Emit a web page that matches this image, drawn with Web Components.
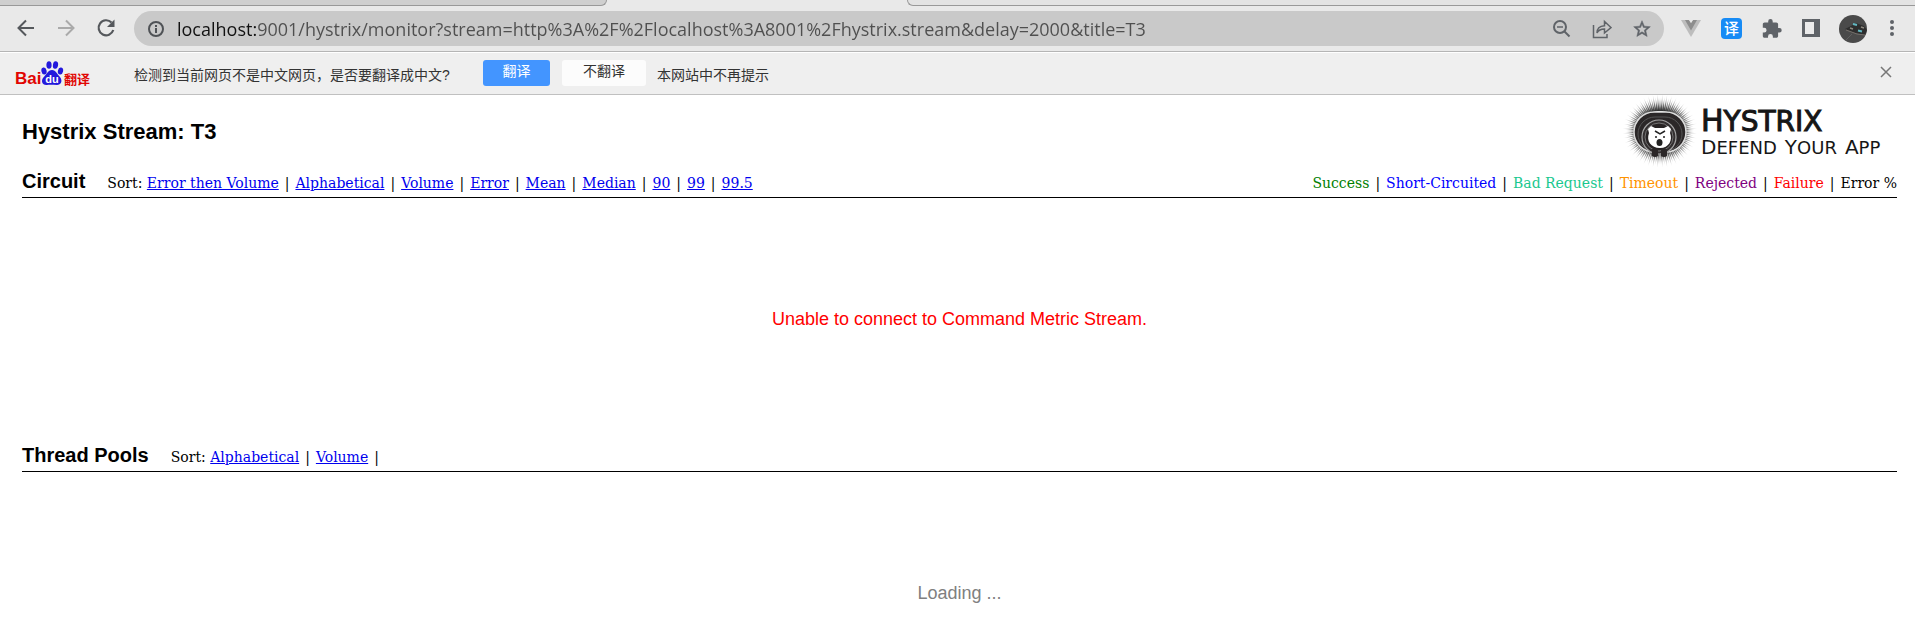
<!DOCTYPE html>
<html lang="en">
<head>
<meta charset="utf-8">
<title>Hystrix Monitor</title>
<style>
html, body { margin: 0; background: #fff; }
body { font-family: "Liberation Sans", Arial, sans-serif; color: #000; }
</style>
</head>
<body>
<hystrix-app></hystrix-app>
<script>
const define = (name, html, setup) => {
  const template = document.createElement('template');
  template.innerHTML = '<style>*{box-sizing:border-box}:host{display:block}button{font:inherit;color:inherit;border:0;padding:0;background:none;cursor:pointer}svg{display:block}</style>' + html;
  customElements.define(name, class extends HTMLElement {
    constructor() {
      super();
      this.attachShadow({ mode: 'open' }).append(template.content.cloneNode(true));
    }
    connectedCallback() { if (setup) setup(this, this.shadowRoot); }
  });
};

define('tab-strip', `
<style>
:host { display: grid; grid-template-columns: 607px 300px 1fr; height: 6px; background: #e9e9e9; }
.tab { background: #cfcfcf; border-bottom: 1px solid #999; border-right: 1px solid #999; border-radius: 0 0 8px 0; }
.rest { background: #e3e3e3; border-bottom: 1px solid #999; border-left: 1px solid #999; border-radius: 0 0 0 8px; }
</style>
<div class="tab"></div><div></div><div class="rest"></div>`);

define('address-bar', `
<style>
:host { flex: 1; min-width: 0; }
.pill { display: flex; align-items: center; height: 35px; border-radius: 18px; background: #c9c9c9; padding: 0 12px 0 13px; }
input { flex: 1; min-width: 0; margin: 0 0 0 10px; padding: 0; border: 0; outline: 0; height: 30px; font: 18px "Open Sans", "Noto Sans", sans-serif; color: transparent; caret-color: #111; background: linear-gradient(90deg, #111 79px, #4f4f4f 79px); -webkit-background-clip: text; background-clip: text; }
.actions { display: flex; gap: 20px; }
button { width: 20px; height: 20px; }
</style>
<div class="pill">
  <button aria-label="Site information"><svg width="20" height="20" viewBox="0 0 20 20"><circle cx="9" cy="10" r="7" fill="none" stroke="#4f5256" stroke-width="2"/><path d="M9 9v5M9 6v2" stroke="#4f5256" stroke-width="2"/></svg></button>
  <input type="text" aria-label="Address" spellcheck="false" value="localhost:9001/hystrix/monitor?stream=http%3A%2F%2Flocalhost%3A8001%2Fhystrix.stream&amp;delay=2000&amp;title=T3">
  <div class="actions">
    <button aria-label="Zoom"><svg width="20" height="20" viewBox="0 0 20 20" fill="none" stroke="#5f6368" stroke-width="2"><circle cx="8" cy="8" r="6"/><path d="M5 8h6" stroke-width="1.5"/><path d="M12.500 12.500l5 5"/></svg></button>
    <button aria-label="Share"><svg width="20" height="20" viewBox="0 0 20 20" fill="none" stroke="#5f6368" stroke-width="1.5"><path d="M1.500 6v12.500H15V15"/><path d="M5 14c0-5 3-7 7.500-7.300V2.500L19 8.500l-6.500 5.500v-4C9 10 6.500 11 5 14z"/></svg></button>
    <button aria-label="Bookmark"><svg width="20" height="20" viewBox="0 0 24 24" fill="#5f6368"><path d="M22 9.240l-7.190-.62L12 2 9.190 8.630 2 9.240l5.460 4.730L5.820 21 12 17.270 18.180 21l-1.630-7.030L22 9.240zM12 15.400l-3.760 2.270 1-4.280-3.320-2.880 4.380-.38L12 6.100l1.710 4.040 4.380.38-3.320 2.880 1 4.280L12 15.400z" stroke="#5f6368" stroke-width=".6"/></svg></button>
  </div>
</div>`);

define('browser-toolbar', `
<style>
:host { display: flex; align-items: center; height: 46px; padding: 0 14px; background: #e9e9e9; border-bottom: 1px solid #b5b5b5; }
.nav { display: flex; gap: 16px; margin-right: 16px; }
.ext { display: flex; align-items: center; gap: 16px; margin-left: 15px; }
button { width: 24px; height: 24px; }
.avatar { width: 28px; height: 28px; }
.ext .more { width: 18px; }
</style>
<div class="nav">
  <button aria-label="Back"><svg width="24" height="24" viewBox="0 0 24 24" fill="none" stroke="#55585c" stroke-width="2"><path d="M20 11H5M12 3.500L4.500 11l7.500 7.500"/></svg></button>
  <button aria-label="Forward"><svg width="24" height="24" viewBox="0 0 24 24" fill="none" stroke="#aaa" stroke-width="2"><path d="M4 11h15M12 3.500l7.500 7.500-7.500 7.500"/></svg></button>
  <button aria-label="Reload"><svg width="24" height="24" viewBox="0 0 24 24"><path d="M17.500 5.500A7.500 7.500 0 1 0 19.300 13" fill="none" stroke="#55585c" stroke-width="2.200"/><path d="M20.500 2.500v7.500H13z" fill="#55585c"/></svg></button>
</div>
<address-bar></address-bar>
<div class="ext">
  <button aria-label="Vue devtools"><svg width="24" height="24" viewBox="0 0 24 24"><path d="M2 3h20L12 20z" fill="#bdbdbd"/><path d="M6 3h4l2 3 2-3h4L12 13.500z" fill="#8d8d8d"/><path d="M10 3h4l-2 3z" fill="#e9e9e9"/></svg></button>
  <button aria-label="Translate"><svg width="24" height="24" viewBox="0 0 24 24"><rect x="2" y="1" width="21" height="21" rx="4" fill="#178bf5"/><text x="12.500" y="17" font-size="15" font-weight="500" fill="#fff" text-anchor="middle" font-family="'Noto Sans CJK SC', sans-serif">译</text></svg></button>
  <button aria-label="Extensions"><svg width="24" height="24" viewBox="0 0 24 24" fill="#5f6368"><g transform="translate(2 1) scale(.9)"><path d="M20.500 11H19V7c0-1.100-.9-2-2-2h-4V3.500a2.500 2.500 0 0 0-5 0V5H4c-1.100 0-2 .9-2 2v3.800h1.500a2.700 2.700 0 0 1 0 5.400H2V20c0 1.100.9 2 2 2h3.800v-1.500a2.700 2.700 0 0 1 5.400 0V22H17c1.100 0 2-.9 2-2v-4h1.500a2.500 2.500 0 0 0 0-5z"/></g></svg></button>
  <button aria-label="Side panel"><svg width="24" height="24" viewBox="0 0 24 24"><path d="M3 2h18v18H3z" fill="#5f6368"/><path d="M6 5h9v12H6z" fill="#ebebeb"/></svg></button>
  <button class="avatar" aria-label="Profile"><svg width="28" height="28" viewBox="0 0 28 28"><circle cx="14" cy="14" r="14" fill="#4a4a4a"/><path d="M6 14l6-3 5-3 8 3 3 4-2 5-10-2z" fill="#2e2e2e"/><path d="M7 15l11 4 8 1" stroke="#75706a" fill="none"/><path d="M14 9l4 1M19 15.500l4 1" stroke="#62b9c2" stroke-width="2"/><path d="M11 13l3 1M22 12l3 1" stroke="#8f8a80" stroke-width="1.500"/><path d="M7 25l6-6" stroke="#5f5f5f"/></svg></button>
  <button class="more" aria-label="Menu"><svg width="18" height="24" viewBox="0 0 18 24" fill="#5f6368"><circle cx="9" cy="5" r="2"/><circle cx="9" cy="11" r="2"/><circle cx="9" cy="17" r="2"/></svg></button>
</div>`);

define('baidu-logo', `
<style>:host { width: 78px; }</style>
<svg width="78" height="28" viewBox="0 1 78 28" role="img" aria-label="Baidu Translate">
  <text x="0" y="25" font-family="'Liberation Sans', Arial, sans-serif" font-weight="700" font-size="17" fill="#e10602">Bai</text>
  <g fill="#2319dc"><ellipse cx="29" cy="12" rx="2.600" ry="3.500" transform="rotate(-12 29 12)"/><ellipse cx="34" cy="6" rx="2.600" ry="3.800"/><ellipse cx="40.500" cy="6" rx="2.600" ry="3.800" transform="rotate(8 40.500 6)"/><ellipse cx="45.500" cy="12" rx="2.600" ry="3.500" transform="rotate(12 45.500 12)"/><path d="M37 11c4 0 5 4 8 7 3 4 1 8-3 8-3 0-7-.5-10 0-5 .5-6-4-4-7 3-3 5-8 9-8z"/></g>
  <text x="37" y="24" text-anchor="middle" font-family="'Liberation Sans', Arial, sans-serif" font-weight="700" font-size="11" fill="#fff">du</text>
  <text x="49" y="25" font-family="'Noto Sans CJK SC', sans-serif" font-weight="700" font-size="13" fill="#e10602">翻译</text>
</svg>`);

define('translate-bar', `
<style>
:host { display: flex; align-items: center; height: 43px; padding: 0 20px 0 15px; background: #efefef; border-top: 1px solid #fff; border-bottom: 1px solid #c0c0c0; font: 14px/26px "Liberation Sans", "Noto Sans CJK SC", sans-serif; color: #333; }
p { margin: 2px 0 0 41px; width: 349px; white-space: nowrap; }
.yes, .no { height: 26px; border-radius: 3px; line-height: 22px; padding-bottom: 4px; margin-bottom: 2px; }
.yes { width: 67px; background: #4395ff; color: #fff; }
.no { width: 84px; background: #fcfcfc; margin-left: 12px; }
.never { margin: 2px auto 0 11px; }
.close { width: 18px; height: 18px; margin-bottom: 2px; }
</style>
<baidu-logo></baidu-logo>
<p>检测到当前网页不是中文网页，是否要翻译成中文?</p>
<button class="yes">翻译</button>
<button class="no">不翻译</button>
<button class="never">本网站中不再提示</button>
<button class="close" aria-label="Close"><svg width="18" height="18" viewBox="0 0 18 18"><path d="M4 3l10 10M14 3L4 13" stroke="#777" stroke-width="1.500"/></svg></button>`);

define('hystrix-logo', `
<style>
:host { display: flex; gap: 2px; }
.words { padding-top: 10px; font-family: "DejaVu Sans", sans-serif; text-transform: uppercase; color: #161616; white-space: nowrap; }
.name { font-size: 28px; line-height: 32px; -webkit-text-stroke: 1px #161616; }
.name::first-letter { font-size: 30px; }
.tag { display: flex; gap: 8px; font-size: 18px; line-height: 18px; }
.tag span::first-letter { font-size: 20px; }
</style>
<svg width="76" height="72" viewBox="0 0 76 72" aria-hidden="true">
  <defs><radialGradient id="fade" gradientUnits="userSpaceOnUse" cx="37" cy="36" r="38"><stop offset=".55" stop-color="#333"/><stop offset=".72" stop-color="#666" stop-opacity=".8"/><stop offset="1" stop-color="#aaa" stop-opacity="0"/></radialGradient></defs>
  <g id="quills" fill="url(#fade)"></g>
  <rect x="11" y="17" width="52" height="40" rx="20" fill="#2b2728" stroke="#ddd" stroke-width="1.500"/>
  <rect x="15" y="22" width="44" height="34" rx="17" fill="none" stroke="#555"/>
  <circle cx="36" cy="42" r="17" fill="#332f30" stroke="#a5a5a5" stroke-width="1.200"/>
  <circle cx="36" cy="42" r="14" fill="#272324" stroke="#888" stroke-width=".8"/>
  <path d="M25 34l3-3 4 2h9l4-2 3 3-1 4c3 7-1 15-10 15s-14-7-11-15z" fill="#fff"/>
  <path d="M32 36l5 3 5-3M32 42h2M40 42h2" stroke="#222" stroke-width="1.500" fill="none"/>
  <ellipse cx="36.500" cy="47.500" rx="3" ry="3.500" fill="#222"/>
  <path d="M29 54h6v7q-3 2-6 0zM38 54h6v7q-3 2-6 0z" fill="#2b2728"/>
</svg>
<div class="words"><div class="name">Hystrix</div><div class="tag"><span>Defend</span><span>Your</span><span>App</span></div></div>`, (host, root) => {
  const NS = 'http://www.w3.org/2000/svg', g = root.getElementById('quills');
  for (let i = 0; i < 96; i++) {
    const a = i * Math.PI / 48, r = i % 2 ? 38 : 34, c = Math.cos(a), s = Math.sin(a);
    const cx = 37 + 22 * c, cy = 36 + 20 * s;
    const p = document.createElementNS(NS, 'path');
    p.setAttribute('d', `M${cx - s} ${cy + c}L${37 + r * c} ${36 + r * s}L${cx + s} ${cy - c}z`);
    g.append(p);
  }
});

define('sort-links', `
<style>
:host { font: 14px/20px "DejaVu Serif", serif; white-space: nowrap; }
a { color: #00e; text-decoration: underline; }
i { font-style: normal; margin: 0 6px; }
</style>
<nav></nav>`, (host, root) => {
  const nav = root.querySelector('nav');
  const names = host.getAttribute('options').split(',');
  nav.innerHTML = 'Sort: ' + names.map(n => `<a href="#">${n}</a>`).join('<i>|</i>') + (host.hasAttribute('trailing') ? '<i>|</i>' : '');
});

define('status-legend', `
<style>
:host { font: 14px/20px "DejaVu Serif", serif; white-space: nowrap; margin-left: auto; }
i { font-style: normal; margin: 0 6px; }
</style>
<span style="color:green">Success</span><i>|</i><span style="color:blue">Short-Circuited</span><i>|</i><span style="color:#19c88f">Bad Request</span><i>|</i><span style="color:#ff9300">Timeout</span><i>|</i><span style="color:purple">Rejected</span><i>|</i><span style="color:red">Failure</span><i>|</i><span>Error %</span>`);

define('metric-section', `
<style>
header { display: flex; align-items: baseline; gap: 22px; height: 34px; border-bottom: 1px solid #000; }
h2 { margin: 0; font-size: 20px; line-height: 34px; white-space: nowrap; }
.body { padding-top: 110px; text-align: center; font-size: 18px; line-height: 22px; }
</style>
<header><h2><slot name="title"></slot></h2><slot name="tools"></slot></header>
<div class="body"><slot></slot></div>`);

define('hystrix-app', `
<style>
main { padding: 0 18px 0 22px; }
.top { display: flex; justify-content: space-between; height: 69px; }
h1 { margin: 0; padding-top: 24px; font-size: 22px; line-height: 26px; }
hystrix-logo { width: 274px; }
.sections { display: grid; gap: 108px; }
.error { color: red; }
.loading { color: gray; }
</style>
<tab-strip></tab-strip>
<browser-toolbar></browser-toolbar>
<translate-bar></translate-bar>
<main>
  <div class="top"><h1>Hystrix Stream: T3</h1><hystrix-logo></hystrix-logo></div>
  <div class="sections">
    <metric-section>
      <span slot="title">Circuit</span>
      <sort-links slot="tools" options="Error then Volume,Alphabetical,Volume,Error,Mean,Median,90,99,99.5"></sort-links>
      <status-legend slot="tools"></status-legend>
      <span class="error">Unable to connect to Command Metric Stream.</span>
    </metric-section>
    <metric-section>
      <span slot="title">Thread Pools</span>
      <sort-links slot="tools" options="Alphabetical,Volume" trailing></sort-links>
      <span class="loading">Loading ...</span>
    </metric-section>
  </div>
</main>`);
</script>
</body>
</html>
